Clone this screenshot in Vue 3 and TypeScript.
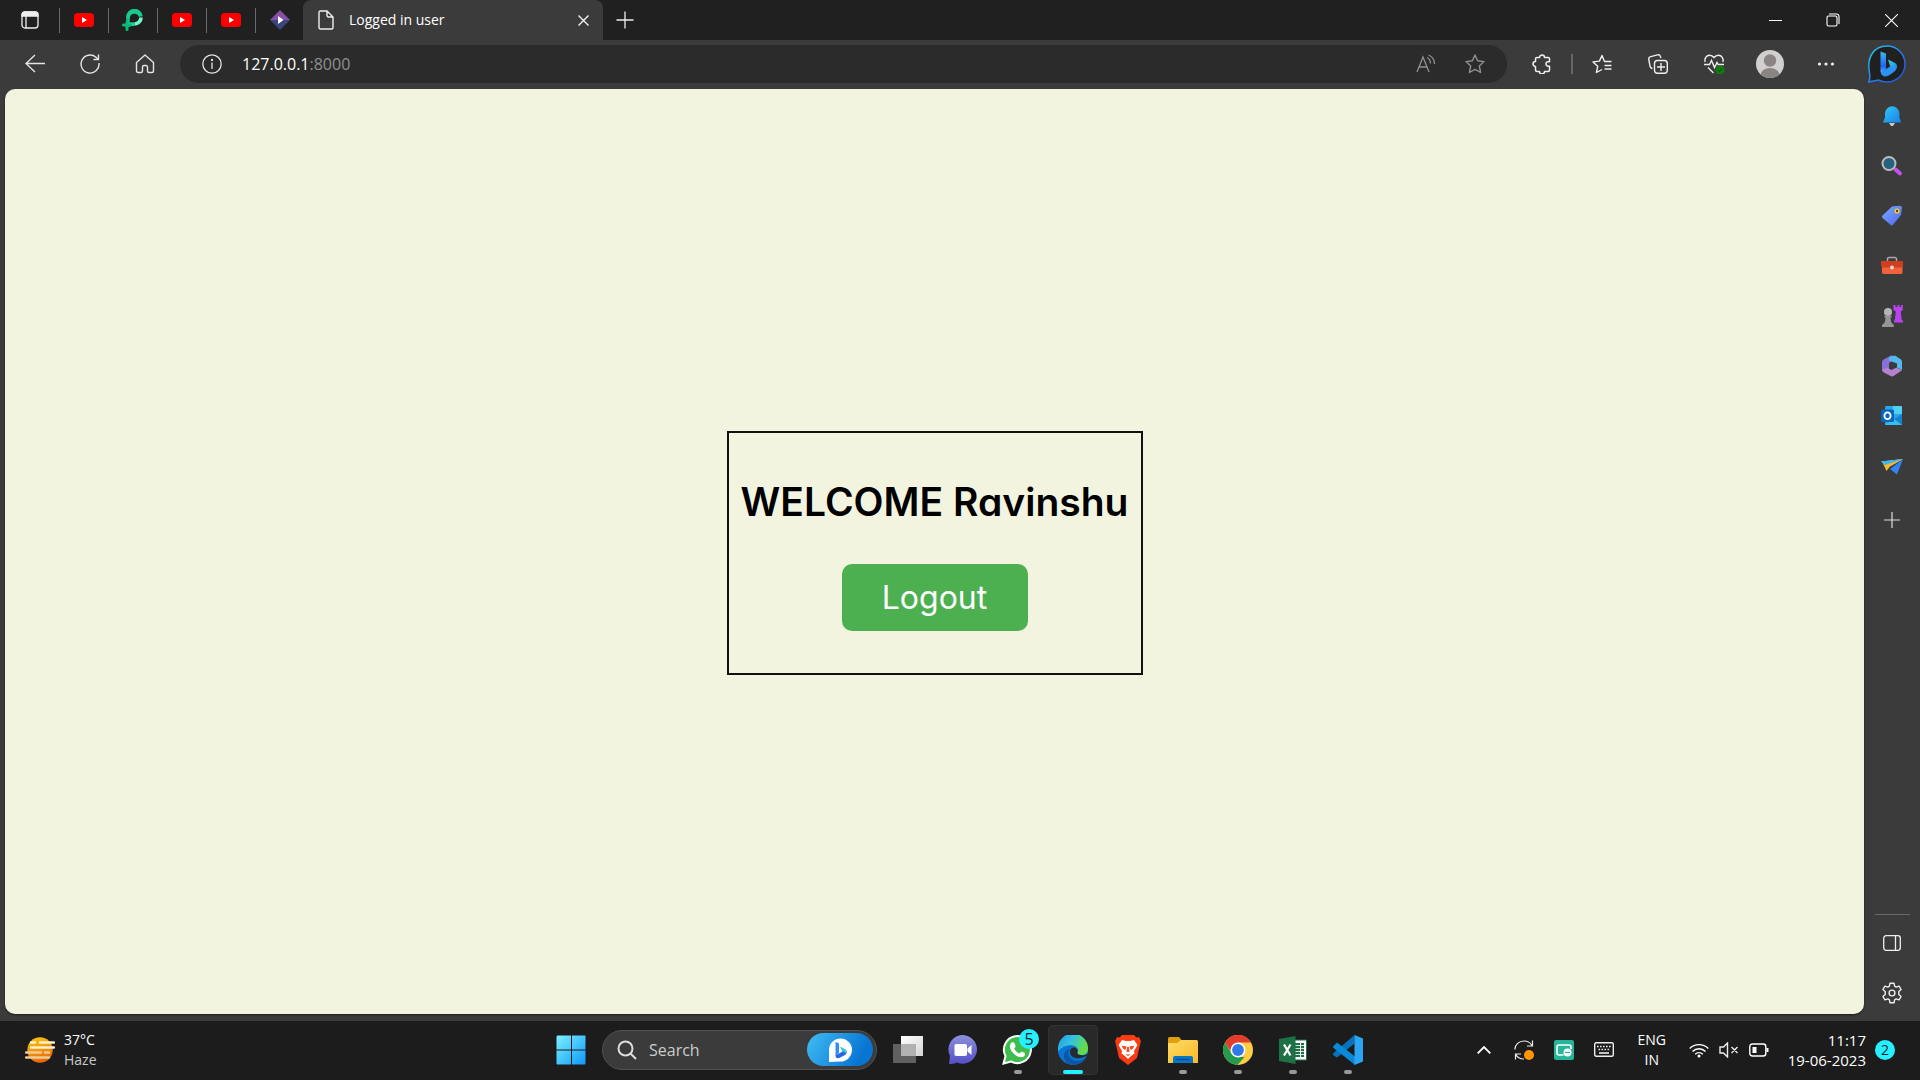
<script setup lang="ts">
interface PinnedTab {
  kind: 'youtube' | 'pluralsight' | 'prism'
  title: string
}

const pinnedTabs: PinnedTab[] = [
  { kind: 'youtube', title: 'YouTube' },
  { kind: 'pluralsight', title: 'Playground' },
  { kind: 'youtube', title: 'YouTube' },
  { kind: 'youtube', title: 'YouTube' },
  { kind: 'prism', title: 'Player' },
]

const userName: string = 'Ravinshu'
</script>

<template>
  <div class="desktop">
    <header class="tabs">
      <button class="tab-actions" aria-label="Tab actions">
        <svg width="18" height="18" viewBox="0 0 18 18" fill="none" stroke="#eee" stroke-width="1.3">
          <rect x="1" y="1" width="16" height="16" rx="3" />
          <path d="M1 4a3 3 0 0 1 3-3h10a3 3 0 0 1 3 3v1H1z" fill="#eee" />
          <path d="M5 5v12" />
        </svg>
      </button>
      <button v-for="(tab, i) in pinnedTabs" :key="i" class="pinned" :aria-label="tab.title">
        <svg v-if="tab.kind === 'youtube'" width="20" height="20" viewBox="0 0 20 20">
          <rect y="3" width="20" height="14" rx="3.5" fill="#f00" />
          <path d="M8 7l5 3-5 3z" fill="#fff" />
        </svg>
        <svg v-else-if="tab.kind === 'pluralsight'" width="22" height="22" viewBox="0 0 22 22" fill="none" stroke-width="3.6">
          <path d="M6 18V8.500a6.500 6.500 0 0 1 13-1" stroke="#14c184" />
          <path d="M6 9a6.500 6.500 0 0 1 12.500-2" stroke="#19cb8e" />
          <path d="M19 8.500A6.500 6.500 0 0 1 12.500 15" stroke="#6ffbd0" />
          <path d="M12.500 15.200H4.500" stroke="#25d59b" />
          <path d="M1.500 16h7M5 13v7.500" stroke="#0bb877" stroke-linecap="round" stroke-width="3" />
        </svg>
        <svg v-else width="20" height="20" viewBox="0 0 20 20">
          <path d="M10 0l10 10H0z" fill="#8650a4" />
          <path d="M0 10h20L10 20z" fill="#39457f" />
          <path d="M8 6l5.500 4L8 14z" fill="#fff" />
        </svg>
      </button>
      <div class="active-tab">
        <svg width="16" height="20" viewBox="0 0 16 20" fill="none" stroke="#eee" stroke-width="1.400">
          <path d="M1 2.500A1.500 1.500 0 0 1 2.500 1H9l6 6v10.500a1.500 1.500 0 0 1-1.500 1.500h-11A1.500 1.500 0 0 1 1 17.500zM9 1v4.500A1.500 1.500 0 0 0 10.500 7H15" />
        </svg>
        <span class="tab-title">Logged in user</span>
        <button class="tab-close" aria-label="Close tab">
          <svg width="11" height="11" viewBox="0 0 11 11" stroke="#f2f2f2" stroke-width="1.400"><path d="M.5.5l10 10M10.500.5l-10 10" /></svg>
        </button>
      </div>
      <button class="new-tab" aria-label="New tab">
        <svg width="18" height="18" viewBox="0 0 18 18" stroke="#eee" stroke-width="1.300"><path d="M9 .5v17M.5 9h17" /></svg>
      </button>
      <div class="window-controls">
        <button aria-label="Minimize"><svg width="13" height="13" viewBox="0 0 13 13" stroke="#fff"><path d="M0 6.500h13" /></svg></button>
        <button aria-label="Restore">
          <svg width="14" height="14" viewBox="0 0 14 14" fill="none" stroke="#fff" stroke-width="1.100"><rect x="1" y="3" width="10" height="10" rx="1.500" /><path d="M3 1h7.500a2.500 2.500 0 0 1 2.500 2.500V11" /></svg>
        </button>
        <button aria-label="Close"><svg width="13" height="13" viewBox="0 0 13 13" stroke="#fff" stroke-width="1.100"><path d="M0 0l13 13M13 0L0 13" /></svg></button>
      </div>
    </header>

    <nav class="toolbar">
      <button class="nav-button" aria-label="Back">
        <svg width="20" height="20" viewBox="0 0 20 20" fill="none" stroke="#e4e4e4" stroke-width="1.400"><path d="M20 9.500H1M10 1L1 9.500 10 18" /></svg>
      </button>
      <button class="nav-button" aria-label="Refresh">
        <svg width="20" height="20" viewBox="0 0 20 20" fill="none" stroke="#e4e4e4" stroke-width="1.400"><path d="M19 9a9 9 0 1 1-3-5.700L18.500 5.500M18.500.5v5h-5" /></svg>
      </button>
      <button class="nav-button" aria-label="Home">
        <svg width="20" height="20" viewBox="0 0 20 20" fill="none" stroke="#e4e4e4" stroke-width="1.400" stroke-linejoin="round"><path d="M1.500 8.500L10 1l8.500 7.500V17a1.500 1.500 0 0 1-1.500 1.500h-3a1.500 1.500 0 0 1-1.500-1.500v-4a1.500 1.500 0 0 0-1.500-1.500H9A1.500 1.500 0 0 0 7.500 13v4A1.500 1.500 0 0 1 6 18.500H3A1.500 1.500 0 0 1 1.500 17z" /></svg>
      </button>
      <div class="address">
        <svg width="20" height="20" viewBox="0 0 20 20" fill="none" stroke="#e4e4e4" stroke-width="1.300"><circle cx="10" cy="10" r="9.200" /><path d="M10 8.500V15" /><circle cx="10" cy="6" r=".5" fill="#e4e4e4" /></svg>
        <a class="url" href="#">127.0.0.1<span class="port">:8000</span></a>
        <button class="address-button" aria-label="Read aloud">
          <svg width="20" height="20" viewBox="0 0 20 20" fill="none" stroke="#909090" stroke-width="1.300"><path d="M1 18L7 3l6 15M3.200 13h7.600M11 3.500c2 .8 3.300 2.800 3.500 6M12.500 1c3.500 1.200 5.800 4.500 6 9" /></svg>
        </button>
        <button class="address-button" aria-label="Add to favorites">
          <svg width="20" height="20" viewBox="0 0 20 20" fill="none" stroke="#909090" stroke-width="1.400" stroke-linejoin="round"><path d="M10 1l2.600 5.800 6.400.8-4.700 4.400 1.300 6.500L10 15.300l-5.600 3.200L5.700 12 1 7.600l6.400-.8z" /></svg>
        </button>
      </div>
      <button class="tool extensions" aria-label="Extensions">
        <svg width="20" height="20" viewBox="0 0 20 20" fill="none" stroke="#eee" stroke-width="1.500" stroke-linejoin="round"><path d="M5 3.500h2.500a2.500 2.500 0 0 1 5 0H16A1.500 1.500 0 0 1 17.500 5v2.800h-1.300a2.200 2.200 0 0 0 0 4.400h1.300V16a1.500 1.500 0 0 1-1.500 1.500h-3.500a2.500 2.500 0 0 1-5 0H5A1.500 1.500 0 0 1 3.500 16v-3.500a2.500 2.500 0 0 1 0-5V5A1.500 1.500 0 0 1 5 3.500z" /></svg>
      </button>
      <span class="divider"></span>
      <button class="tool" aria-label="Favorites">
        <svg width="20" height="20" viewBox="0 0 20 20" fill="none" stroke="#eee" stroke-width="1.400" stroke-linejoin="round"><path d="M19.500 7.500h-7L10 1.500l-2.600 5.600-6.400.8 4.700 4.400-1.300 6.200 5.600-3M12.500 11.500h7M12.500 15h7" /></svg>
      </button>
      <button class="tool" aria-label="Collections">
        <svg width="20" height="20" viewBox="0 0 20 20" fill="none" stroke="#eee" stroke-width="1.400"><rect x="6.500" y="6.500" width="12.800" height="12.800" rx="3" /><path d="M13 9v8M9 13h8M4.500 14.500C3 14.500 2.400 13.500 2 12L.8 5.500C.5 4 1.300 3 2.700 2.600L9.500.9c1.600-.3 2.600.4 3 1.700l.3 1.400" /></svg>
      </button>
      <button class="tool" aria-label="Browser essentials">
        <svg width="21" height="20" viewBox="0 0 21 20" fill="none" stroke="#eee" stroke-width="1.400"><path d="M1.200 8C0 4.500 2.500 1.200 5.500 1.200c2 0 3.500 1 4.500 2.300 1-1.300 2.500-2.300 4.500-2.300 3 0 5.500 3.300 4.300 6.800M0 10.500h5.500l2-4 3 7 2.500-5 1.200 2H20M4 13.500L9.500 19" /><circle cx="16" cy="16" r="4.500" fill="#107c10" stroke="none" /><path d="M14 16l1.500 1.500L18 15" stroke="#073f07" stroke-width="1" /></svg>
      </button>
      <button class="tool" aria-label="Profile">
        <svg width="28" height="28" viewBox="0 0 28 28"><clipPath id="avatar"><circle cx="14" cy="14" r="14" /></clipPath><g clip-path="url(#avatar)"><path d="M0 0h28v28H0z" fill="#d2d0ce" /><circle cx="14" cy="10.500" r="6.200" fill="#8a8583" /><ellipse cx="14" cy="25" rx="9.500" ry="7" fill="#8a8583" /></g></svg>
      </button>
      <button class="tool" aria-label="Settings and more">
        <svg width="18" height="4" viewBox="0 0 18 4" fill="#eee"><circle cx="2.500" cy="2" r="1.600" /><circle cx="9" cy="2" r="1.600" /><circle cx="15.500" cy="2" r="1.600" /></svg>
      </button>
      <button class="bing" aria-label="Bing chat">
        <svg width="38" height="38" viewBox="0 0 38 38">
          <defs>
            <linearGradient id="ring" x1="0" y1="0" x2="1" y2="1"><stop stop-color="#1fd0ee" /><stop offset=".55" stop-color="#2878ee" /><stop offset="1" stop-color="#1f50d6" /></linearGradient>
            <linearGradient id="bee" x1="0" y1="0" x2="0" y2="1"><stop stop-color="#39b9f4" /><stop offset=".7" stop-color="#2563f0" /><stop offset="1" stop-color="#48c8fa" /></linearGradient>
            <linearGradient id="leaf" x1="0" y1="0" x2="1" y2="1"><stop stop-color="#31dbd2" /><stop offset="1" stop-color="#267bed" /></linearGradient>
          </defs>
          <path d="M1 37c1-3 1-6 .5-9C-1.500 12 6 1 19 1a18 18 0 0 1 0 36c-3 0-6-.7-8.500-2C8 35.500 4.500 36 1 37z" fill="#202020" stroke="url(#ring)" stroke-width="1.500" />
          <path d="M12.500 6.500l5.500 2v15l-4.500 4.500c-1-.5-1-1-1-2z" fill="url(#bee)" />
          <path d="M20 14.500l7 3.500c3 2 2.500 5.500 0 7.500l-4.500-3-2.500-8z" fill="url(#leaf)" />
          <path d="M13 27l10-6 5 3c-1 3-8.500 8-11.500 7.500-1.500-.3-4-2-3.500-4.500z" fill="#2b92f5" />
        </svg>
      </button>
    </nav>

    <div class="workspace">
      <main class="page">
        <section class="card">
          <h1>WELCOME {{ userName }}</h1>
          <button class="logout">Logout</button>
        </section>
      </main>

      <aside class="sidebar">
        <button aria-label="Notifications">
          <svg width="22" height="22" viewBox="0 0 22 22"><defs><linearGradient id="bell" x1="0" y1="0" x2="1" y2="1"><stop stop-color="#36c5f5" /><stop offset="1" stop-color="#1683e8" /></linearGradient></defs><path d="M8 18h6l-2 3h-2z" fill="#c8c8c8" /><path d="M2 17.500l2-5V8.500a7.200 7.200 0 0 1 14.400 0v4l1.800 5z" fill="url(#bell)" /></svg>
        </button>
        <button aria-label="Search">
          <svg width="22" height="22" viewBox="0 0 22 22"><path d="M14.500 14.500l4.500 4" stroke="#c252e9" stroke-width="4" stroke-linecap="round" /><circle cx="8" cy="8.500" r="6.500" fill="#24627f" stroke="#bcbcbc" stroke-width="2" /></svg>
        </button>
        <button aria-label="Shopping">
          <svg width="22" height="22" viewBox="0 0 22 22"><defs><linearGradient id="tag" x1="0" y1="0" x2="1" y2="1"><stop stop-color="#7bacff" /><stop offset="1" stop-color="#4f63ef" /></linearGradient></defs><path d="M11 1.500l7.500-.8c1.500 0 2.500.8 2.500 2.300l-1 7-8 9.800c-.8.800-1.700.8-2.500 0L1.500 13c-.7-.8-.7-1.600 0-2.400z" fill="url(#tag)" /><circle cx="16" cy="6" r="1.900" fill="#5a4520" stroke="#f8d51d" stroke-width="1.400" /></svg>
        </button>
        <button aria-label="Tools">
          <svg width="22" height="22" viewBox="0 0 22 22"><path d="M6.500 6V4a1.500 1.500 0 0 1 1.500-1.500h6A1.500 1.500 0 0 1 15.500 4v2" fill="none" stroke="#a9a9a9" stroke-width="1.500" /><rect x="1" y="6" width="20.500" height="13" rx="1.500" fill="#f1613b" /><path d="M0 7a1 1 0 0 1 1-1h20a1 1 0 0 1 1 1v4l-2 1.500H2L0 11z" fill="#cf3f1d" /><circle cx="11" cy="12.500" r="2" fill="#d6d6d6" /></svg>
        </button>
        <button aria-label="Games">
          <svg width="22" height="22" viewBox="0 0 22 22"><path d="M12.500 0h2v2h2V0h2v2h1.500V0h1.800v5l-2 1.500.7 7.500 1.500 2v1.500h-9V16l1-2 .8-7.500L12.500 5z" fill="#b843ef" /><circle cx="7" cy="7" r="4" fill="#b5b5b5" /><path d="M3.500 10.500h7v2H9.300l1 5 2.500 2.500v2H1v-2l2.700-2.500 1-5H3.500z" fill="#969696" /></svg>
        </button>
        <button aria-label="Microsoft 365">
          <svg width="22" height="22" viewBox="0 0 22 22"><path d="M11 0L2.500 4.500Q1 5.500 1 7.500v8L6 18.500l3-2-1-2V8l6-4z" fill="#8671d7" /><path d="M8 2L14 .5l6 4Q21 5.500 21 7v8l-5-2.500V8.500L8 5.500z" fill="#55b9ee" /><path d="M1 15l5-2.500 4.500 2.500 5-2.500 5.500 2.700L12.500 21q-1.500.8-3 0L2 17z" fill="#b482cf" /></svg>
        </button>
        <button aria-label="Outlook">
          <svg width="22" height="22" viewBox="0 0 22 22"><path d="M5 1h15a1 1 0 0 1 1 1v18H4V2z" fill="#28a8ea" /><path d="M12 1h8a1 1 0 0 1 1 1v7h-9z" fill="#50d0f5" /><path d="M13 14l8-5v11H8z" fill="#1483d0" /><path d="M4 20h17l-8-6z" fill="#38bdf0" /><rect y="4.500" width="13" height="12.500" rx="1.500" fill="#0a65bd" /><ellipse cx="6.500" cy="10.700" rx="3.100" ry="3.400" fill="none" stroke="#fff" stroke-width="1.800" /></svg>
        </button>
        <button aria-label="Drop">
          <svg width="22" height="22" viewBox="0 0 22 22"><path d="M0 6.500l22-2.500-12 7z" fill="#38aaf0" /><path d="M1 6.500l4.500 9.500 3.500-4.500 13-7.500z" fill="#f6b631" /><path d="M22 4l-6 15.500-7-5.500z" fill="#3483f2" /><path d="M0 6.500l4 3.500L22 4z" fill="#3ab7ef" /></svg>
        </button>
        <button class="add" aria-label="Customize">
          <svg width="16" height="16" viewBox="0 0 16 16" stroke="#ddd" stroke-width="1.200"><path d="M8 0v16M0 8h16" /></svg>
        </button>
        <div class="sidebar-end">
          <button aria-label="Hide sidebar">
            <svg width="18" height="16" viewBox="0 0 18 16" fill="none" stroke="#eee" stroke-width="1.300"><rect x=".7" y=".7" width="16.600" height="14.600" rx="2.500" /><path d="M12.500 1v14" /></svg>
          </button>
          <button aria-label="Sidebar settings">
            <svg width="22" height="22" viewBox="0 0 22 22" fill="none" stroke="#eee" stroke-width="1.400" stroke-linejoin="round"><path d="M9 1.200h4l.6 3 1.600.9 2.900-1 2 3.400-2.300 2v3l2.300 2-2 3.400-2.900-1-1.600.9-.6 3H9l-.6-3-1.600-.9-2.900 1-2-3.400 2.300-2v-3l-2.300-2 2-3.400 2.900 1 1.600-.9z" /><circle cx="11" cy="11" r="2.900" /></svg>
          </button>
        </div>
      </aside>
    </div>

    <footer class="taskbar">
      <button class="weather">
        <svg width="30" height="26" viewBox="0 0 30 26"><defs><linearGradient id="sun" x1="0" y1="0" x2=".3" y2="1"><stop stop-color="#fccb12" /><stop offset="1" stop-color="#ed6908" /></linearGradient></defs><circle cx="15" cy="13" r="12.700" fill="url(#sun)" /><g fill="none" stroke-width="2.400" stroke-linecap="round"><path d="M6 5.500h4M15 5.500h14M6 10.500h23" stroke="#fbf1cd" /><path d="M1 15.500h15M20 15.500h4M1 20.500h23" stroke="#e9cd94" /></g></svg>
        <span class="weather-text"><span>37°C</span><span class="haze">Haze</span></span>
      </button>

      <div class="apps">
        <button class="app" aria-label="Start">
          <svg width="30" height="30" viewBox="0 0 30 30"><defs><linearGradient id="win" x1="0" y1="0" x2="30" y2="30" gradientUnits="userSpaceOnUse"><stop stop-color="#7df3ff" /><stop offset="1" stop-color="#0e97fb" /></linearGradient></defs><path d="M1.500.5H15v14H.5v-13zM16 .5h13q.5 0 .5 1v13H16zM.5 15.500H15v14H1.500q-1 0-1-1zM16 15.500h13.500v13q0 1-1 1H16z" fill="url(#win)" /></svg>
        </button>
        <div class="search">
          <svg width="20" height="20" viewBox="0 0 20 20" fill="none" stroke="#ddd" stroke-width="2"><circle cx="8.500" cy="8.500" r="7" /><path d="M13.500 13.500L19 19" /></svg>
          <input type="text" placeholder="Search" aria-label="Search" />
          <button class="search-bing" aria-label="Bing">
            <svg width="24" height="24" viewBox="0 0 24 24"><path d="M1 24V12A11.500 11.500 0 1 1 12.500 23.500z" fill="#fff" /><path d="M7.500 4l3.500 1.300V15l-3.500 3z" fill="#2d8ff0" /><path d="M12.500 9l4.500 2.500c2.500 1.500 2 4 0 5.500L11 20c-2 .5-3.500-.5-3.500-2.500l7-4z" fill="#2667ea" /><path d="M12.500 9l4.500 2.500c1.500 1 1.800 2.500 1.200 3.700L14 13z" fill="#34cbd8" /></svg>
          </button>
        </div>
        <button class="app" aria-label="Task view">
          <svg width="30" height="30" viewBox="0 0 30 30"><defs><linearGradient id="pane" x1="0" y1="0" x2="1" y2="1"><stop stop-color="#fff" /><stop offset="1" stop-color="#d4d4d4" /></linearGradient></defs><path d="M8 1h22v20H8z" fill="url(#pane)" /><path d="M0 9h23v19H0z" fill="#606060" /><path d="M8 9h15v12H8z" fill="#b1b1b1" /></svg>
        </button>
        <button class="app" aria-label="Chat">
          <svg width="30" height="30" viewBox="0 0 30 30"><defs><linearGradient id="chat" x1="0" y1="0" x2="0" y2="1"><stop stop-color="#8b91dc" /><stop offset="1" stop-color="#554fc5" /></linearGradient></defs><path d="M1 29l1-8A14.300 14.300 0 1 1 9 27.500C6.500 28.500 4 29 1 29z" fill="url(#chat)" /><rect x="6.500" y="9" width="12.500" height="12" rx="1.800" fill="#fff" /><path d="M19.500 13.500L23.500 10v10l-4-3.500z" fill="#fff" /></svg>
        </button>
        <button class="app" aria-label="WhatsApp, 5 unread">
          <svg width="31" height="31" viewBox="0 0 31 31"><path d="M1.500 29.500l2-7.500A13.500 13.500 0 1 1 9 27.500z" fill="#3fbd4c" stroke="#fff" stroke-width="2" /><path d="M10 8l2.500 1 1.200 3.500-1.500 2c1 2.500 3 4 5.200 5l2-2 3.300 1.500c.8 1 .2 3-1.200 3.700C16 25 8 18 8 12.500 8 10.500 9 8.500 10 8z" fill="#fff" /></svg>
          <span class="count">5</span><i class="running"></i>
        </button>
        <button class="app active" aria-label="Microsoft Edge">
          <svg width="30" height="30" viewBox="0 0 30 30"><defs><linearGradient id="wave" x1="0" y1="0" x2="1" y2=".4"><stop stop-color="#2299e5" /><stop offset=".5" stop-color="#35c3e0" /><stop offset="1" stop-color="#65dc47" /></linearGradient></defs><circle cx="15" cy="15" r="15" fill="#0a74d2" /><path d="M0 13A15 15 0 0 1 30 14c0 4-3 6-6.500 6-4 0-5-1.500-4-3 1.500-2.500-.5-6-4.500-6.500C9 9.700 3 12 0 17z" fill="url(#wave)" /><path d="M12 14c-4 5 0 12 7 12 3 0 6-1 8.500-3-4.500 8-16 9-20 3C4 20.500 7 15 12 14z" fill="#0c56a4" /><path d="M15 12.500c-2.500 1-3.500 3-2.800 6 1 4 6.800 6.300 13 3.800l4.300-1.500-1.500 2.200 2-2.500-1-1c-3 1.500-11 1-9.500-2.500 1-2-1-4.500-4.500-4.500z" fill="#252b30" /></svg>
          <i class="running"></i>
        </button>
        <button class="app" aria-label="Brave">
          <svg width="26" height="30" viewBox="0 0 26 30"><path d="M7 0h12l2.500 2.500L24 2l2 4.500-1 3L22 23l-9 7-9-7L1 9.500l-1-3L2 2l2.500.5z" fill="#fb3b13" /><path d="M7 5l4 1h4l4-1 3.500 5-3.500 6 .5 2.500-4 3L13 24l-2.500-2.500-4-3L7 16 3.500 10z" fill="#fff" /><path d="M6.500 10.500l5 1-1 3.500-2-1zM19.500 10.500l-5 1 1 3.500 2-1zM10 18.500l3 1.200 3-1.200-3 2.800zM12.200 12h1.600l.7 4.500-1.500.8-1.500-.8z" fill="#fb4418" /></svg>
        </button>
        <button class="app" aria-label="File Explorer">
          <svg width="30" height="30" viewBox="0 0 30 30"><defs><linearGradient id="folder" x1="0" y1="0" x2="1" y2="1"><stop stop-color="#ffdc63" /><stop offset="1" stop-color="#f8b92a" /></linearGradient></defs><path d="M0 3.500Q0 2 1.500 2H11l2.500 3v3H0z" fill="#dfa00b" /><path d="M0 8h9l4-3h15.500Q30 5 30 6.500V28H0z" fill="url(#folder)" /><path d="M5 28v-5q0-2 2-2h16q2 0 2 2v5z" fill="#0874c6" /><path d="M8.500 24.500h13" stroke="#07508f" stroke-width="1.500" /></svg>
          <i class="running"></i>
        </button>
        <button class="app" aria-label="Google Chrome">
          <svg width="30" height="30" viewBox="0 0 30 30"><circle cx="15" cy="15" r="15" fill="#ffcd40" /><path d="M2 7.500A15 15 0 0 1 28 7.500H15L9 18.500z" fill="#e33b2e" /><path d="M2 7.500L8.500 18.700 15 22h6.500L14.500 30A15 15 0 0 1 2 7.500z" fill="#229b4e" /><circle cx="15" cy="15" r="7.500" fill="#fff" /><circle cx="15" cy="15" r="5.900" fill="#3079eb" /></svg>
          <i class="running"></i>
        </button>
        <button class="app" aria-label="Excel">
          <svg width="28" height="28" viewBox="0 0 28 28"><path d="M15 4h12.500v20H15z" fill="#fff" stroke="#1e7145" /><path d="M16 7h5v14h-5zM22 7h3v14h-3z" fill="#1e7145" /><path d="M16 9.500h9M16 12.500h9M16 15.500h9M16 18.500h9" stroke="#fff" stroke-width=".8" /><path d="M0 3l16.500-3v28L0 25z" fill="#1e7145" /><path d="M5 8.500l6.500 11M11.500 8.500L5 19.500" stroke="#fff" stroke-width="2.200" /></svg>
          <i class="running"></i>
        </button>
        <button class="app" aria-label="Visual Studio Code">
          <svg width="30" height="30" viewBox="0 0 30 30"><path d="M0 18.500L21.500 0v8.500L4 22.500 0 20z" fill="#0872bb" /><path d="M0 11.500L4 7.500 22 21.500V30L0 12.500z" fill="#0a89d6" /><path d="M21.500 0L30 3.500v23L21.500 30z" fill="#29a5f1" /></svg>
          <i class="running"></i>
        </button>
      </div>

      <div class="tray">
        <button class="tray-icon" aria-label="Show hidden icons"><svg width="14" height="8" viewBox="0 0 14 8" fill="none" stroke="#fff" stroke-width="1.800"><path d="M.7 7.300L7 1l6.300 6.300" /></svg></button>
        <button class="tray-icon" aria-label="Sync">
          <svg width="20" height="20" viewBox="0 0 20 20" fill="none" stroke="#eee" stroke-width="1.200"><path d="M.8 9.500C1 4.500 5 1 10 1c3.500 0 6.500 2 8 4.500M18.500.5v5.500H13M1.500 19.500V14H7M1.500 14c1.500 3 4.500 5 8.500 5" /><circle cx="15" cy="15" r="5" fill="#ff9500" stroke="none" /></svg>
        </button>
        <button class="tray-icon" aria-label="Screen share">
          <svg width="20" height="20" viewBox="0 0 20 20"><rect width="20" height="20" rx="2" fill="#26b598" /><path d="M9.500 15H5q-2 0-2-2V7q0-2 2-2h10q2 0 2 2v2" fill="none" stroke="#fff" stroke-width="1.600" /><circle cx="13.500" cy="12.500" r="4" fill="#fff" /><path d="M11 12.500h5" stroke="#26b598" stroke-width="1.200" /></svg>
        </button>
        <button class="tray-icon" aria-label="Touch keyboard">
          <svg width="20" height="15" viewBox="0 0 20 15" fill="none" stroke="#eee"><rect x=".7" y=".7" width="18.600" height="13.600" rx="1.500" stroke-width="1.400" /><path d="M3 4.500h14M4.500 7.500h12" stroke-width="1.600" stroke-dasharray="1.600 1.400" /><path d="M5 11h10" stroke-width="1.600" /></svg>
        </button>
        <button class="language"><span>ENG</span><span>IN</span></button>
        <button class="status" aria-label="Network, volume and battery">
          <svg width="20" height="16" viewBox="0 0 20 16" fill="none" stroke="#fff" stroke-width="1.400"><path d="M.7 6.500a13 13 0 0 1 18.600 0M3.500 9.500a9 9 0 0 1 13 0M6.200 12.200a5.400 5.400 0 0 1 7.600 0" /><circle cx="10" cy="14" r="1.500" fill="#fff" stroke="none" /></svg>
          <svg width="20" height="16" viewBox="0 0 20 16" fill="none" stroke="#eee" stroke-width="1.400"><path d="M1 5h3.500L8.500 1v14l-4-4H1zM12.500 5l6 6M18.500 5l-6 6" /></svg>
          <svg width="20" height="14" viewBox="0 0 20 14" fill="none" stroke="#fff" stroke-width="1.400"><rect x=".8" y="1" width="16" height="12" rx="2.500" /><path d="M3.500 4h4v6h-4z" fill="#fff" stroke="none" /><path d="M18.500 5v4" stroke-width="2" /></svg>
        </button>
        <button class="clock"><span>11:17</span><span>19-06-2023</span></button>
        <button class="notices" aria-label="2 notifications">2</button>
      </div>
    </footer>
  </div>
</template>

<style>
body {
  margin: 0;
  background: #3b3b3b;
}
</style>

<style scoped>
.desktop {
  display: flex;
  flex-direction: column;
  min-height: 100vh;
  color: #fff;
  background: #3b3b3b;
  font-family: "Open Sans", "Noto Sans", sans-serif;
  font-size: 14px;
}

button {
  display: flex;
  align-items: center;
  justify-content: center;
  flex: none;
  margin: 0;
  padding: 0;
  border: 0;
  color: inherit;
  background: none;
  font: inherit;
}

svg {
  display: block;
  flex: none;
}

.tabs {
  display: flex;
  height: 40px;
  background: #202020;
}

.tab-actions {
  width: 59px;
}

.pinned {
  position: relative;
  width: 49px;
}

.pinned::before {
  content: "";
  position: absolute;
  left: 0;
  top: 8px;
  width: 1px;
  height: 25px;
  background: #6a6a6a;
}

.active-tab {
  display: flex;
  align-items: center;
  box-sizing: border-box;
  width: 300px;
  margin-left: -1px;
  padding: 0 14px 0 15px;
  border-radius: 8px 8px 0 0;
  background: #3b3b3b;
  z-index: 1;
}

.tab-title {
  flex: 1;
  margin-left: 15px;
  line-height: 20px;
}

.new-tab {
  width: 43px;
}

.window-controls {
  display: flex;
  margin-left: auto;
}

.window-controls button {
  width: 58px;
}

.toolbar {
  display: flex;
  align-items: center;
  height: 48px;
  padding-left: 7px;
}

.nav-button {
  width: 55px;
  height: 40px;
}

.address {
  display: flex;
  flex: 1;
  align-items: center;
  box-sizing: border-box;
  height: 38px;
  margin-left: 8px;
  padding: 0 8px 0 22px;
  border-radius: 19px;
  background: #2b2b2b;
}

.url {
  flex: 1;
  margin-left: 20px;
  color: #fff;
  font-size: 16px;
  line-height: 24px;
  text-decoration: none;
}

.port {
  color: #909090;
}

.address-button {
  width: 49px;
  height: 38px;
}

.tool {
  width: 56px;
  height: 40px;
}

.extensions {
  margin: 0 1px 0 7px;
}

.divider {
  width: 2px;
  height: 20px;
  margin-right: 1px;
  background: #666;
}

.bing {
  width: 66px;
}

.workspace {
  display: flex;
  flex: 1;
  padding-top: 1px;
}

.page {
  display: flex;
  flex: 1;
  align-items: center;
  justify-content: center;
  margin: 0 0 7px 5px;
  padding-top: 2px;
  border-radius: 10px;
  background: #f3f4df;
  box-shadow: 0 1px 2px #1c1c1c;
}

.card {
  display: flex;
  flex-direction: column;
  align-items: center;
  box-sizing: border-box;
  min-width: 416px;
  padding: 39px 12px 42px;
  border: 2px solid #111;
}

/* cv11 selects the single-storey "a" */
h1 {
  margin: 0 0 32px;
  color: #000;
  font-family: Inter, sans-serif;
  font-size: 39px;
  font-weight: 600;
  font-feature-settings: "cv11";
  line-height: 60px;
}

.logout {
  width: 186px;
  height: 67px;
  border-radius: 10px;
  background: #4caf50;
  font-family: Inter, sans-serif;
  font-size: 32px;
}

.sidebar {
  display: flex;
  flex-direction: column;
  align-items: center;
  width: 56px;
  padding-top: 2px;
  box-sizing: border-box;
}

.sidebar button {
  width: 50px;
  height: 50px;
}

.add {
  margin-top: 4px;
}

.sidebar-end {
  margin-top: auto;
  padding: 3px 0;
  border-top: 1px solid #686868;
}

.sidebar-end button {
  width: 35px;
}

.taskbar {
  display: grid;
  grid-template-columns: 1fr auto 1fr;
  align-items: center;
  box-sizing: border-box;
  height: 59px;
  padding-bottom: 2px;
  background: #1c1c1c;
}

.weather {
  justify-self: start;
  gap: 9px;
  margin-left: 25px;
}

.weather-text,
.language,
.clock {
  display: flex;
  flex-direction: column;
  line-height: 20px;
}

.weather-text {
  align-items: flex-start;
}

.haze {
  color: #c8c8c8;
}

.apps {
  display: flex;
  align-items: center;
  margin-right: 2px;
}

.app {
  position: relative;
  width: 55px;
  height: 50px;
}

.app.active {
  width: 50px;
  margin: 0 2px 0 3px;
  border-radius: 5px;
  background: #292929;
  box-shadow: inset 0 0 0 1px #333;
}

.running {
  position: absolute;
  bottom: 1px;
  left: 50%;
  width: 8px;
  height: 4px;
  margin-left: -4px;
  border-radius: 2px;
  background: #999;
}

.active .running {
  width: 20px;
  margin-left: -10px;
  background: #26f0ff;
}

.count {
  position: absolute;
  top: 4px;
  right: 6px;
  width: 20px;
  height: 20px;
  border-radius: 10px;
  color: #10272a;
  background: #26f0ff;
  font-size: 16px;
  line-height: 20px;
}

.search {
  display: flex;
  align-items: center;
  box-sizing: border-box;
  width: 275px;
  height: 40px;
  margin: 0 3px 0 4px;
  padding: 0 3px 0 14px;
  border: 1px solid #525252;
  border-radius: 20px;
  background: #3b3b3b;
}

.search input {
  flex: 1;
  min-width: 0;
  margin: 0 0 0 12px;
  padding: 0;
  border: 0;
  outline: 0;
  color: #fff;
  background: none;
  font: 16px "Open Sans", sans-serif;
}

.search input::placeholder {
  color: #ccc;
  opacity: 1;
}

.search-bing {
  width: 66px;
  height: 33px;
  border-radius: 17px;
  background: linear-gradient(120deg, #41bdf3, #0875d3 80%);
}

.tray {
  display: flex;
  align-items: center;
  justify-self: end;
  margin-right: 25px;
}

.tray-icon {
  width: 40px;
  height: 40px;
}

.language {
  width: 56px;
}

.status {
  gap: 10px;
  margin: 0 19px 0 9px;
}

.clock {
  align-items: flex-end;
  font-size: 15px;
}

.notices {
  width: 20px;
  height: 20px;
  margin-left: 9px;
  border-radius: 10px;
  color: #10272a;
  background: #26f0ff;
  font-size: 14px;
}
</style>
